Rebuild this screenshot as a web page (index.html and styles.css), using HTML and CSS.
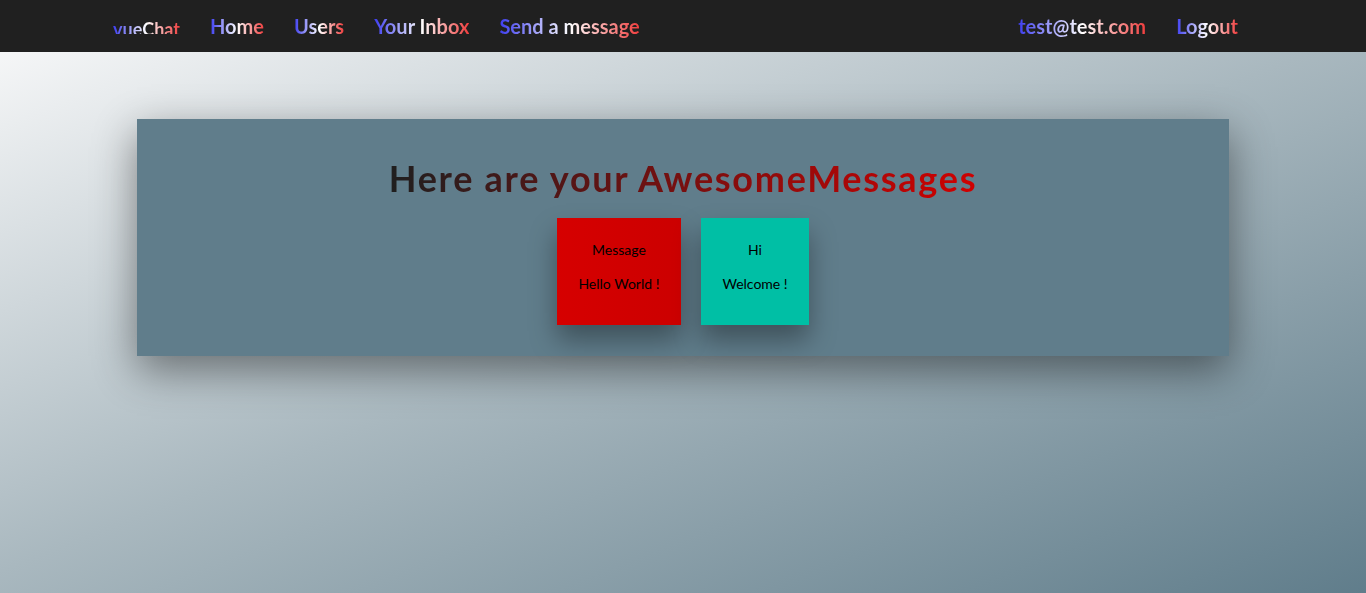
FILE: index.html
```html
<!DOCTYPE html>
<html>
<head>
<meta charset="utf-8">
<link rel="stylesheet" href="styles.css">
</head>
<body>
<nav class="navbar">
  <div class="nav-inner">
    <div class="nav-left">
      <a class="brand"><span class="grad">vueChat</span></a>
      <a class="nav-link"><span class="grad">Home</span></a>
      <a class="nav-link"><span class="grad">Users</span></a>
      <a class="nav-link"><span class="grad">Your Inbox</span></a>
      <a class="nav-link"><span class="grad">Send a message</span></a>
    </div>
    <div class="nav-right">
      <a class="nav-link"><span class="grad">test@test.com</span></a>
      <a class="nav-link"><span class="grad">Logout</span></a>
    </div>
  </div>
</nav>
<main class="page">
  <section class="panel">
    <h1 class="title">Here are your AwesomeMessages</h1>
    <div class="cards">
      <div class="card card-red">
        <p>Message</p>
        <p>Hello World !</p>
      </div>
      <div class="card card-teal">
        <p>Hi</p>
        <p>Welcome !</p>
      </div>
    </div>
  </section>
</main>
</body>
</html>
```

FILE: styles.css
```css
* { box-sizing: border-box; }
html, body { margin: 0; padding: 0; height: 100%; }
body {
  font-family: Lato, "Open Sans", sans-serif;
  display: flex;
  flex-direction: column;
  min-height: 593px;
}
.navbar {
  background: #202020;
  height: 52px;
  flex: none;
}
.nav-inner {
  width: 1140px;
  margin: 0 auto;
  height: 100%;
  display: flex;
  justify-content: space-between;
  align-items: center;
}
.nav-left, .nav-right { display: flex; align-items: center; }
.grad {
  background: linear-gradient(to right, #3c3cf0, #ffffff 50%, #f03c3c);
  -webkit-background-clip: text;
  background-clip: text;
  color: transparent;
}
.brand {
  font-size: 18px;
  font-weight: 700;
  padding: 0 15px 0 0;
  height: 16px;
  line-height: 22px;
  overflow: hidden;
  display: block;
  margin-top: -1px;
}
.brand .grad { display: inline-block; line-height: 22px; }
.nav-link {
  font-size: 20px;
  font-weight: 700;
  padding: 0 15px;
  line-height: 52px;
}
.page {
  flex: 1;
  background: linear-gradient(to bottom right, #f5f6f7 0%, #a9b8bf 48%, #607d8b 100%);
  padding-top: 67px;
}
.panel {
  width: 80%;
  margin: 0 auto;
  background: #607d8b;
  box-shadow: 0 14px 40px rgba(0,0,0,0.45);
  padding: 38px 0 31px;
  display: flex;
  flex-direction: column;
  align-items: center;
}
.title {
  margin: 0 0 18px;
  font-size: 36px;
  font-weight: 700;
  letter-spacing: 1.72px;
  line-height: 43px;
  background: linear-gradient(to right, #1f1f1f, #d00000);
  -webkit-background-clip: text;
  background-clip: text;
  color: transparent;
}
.cards {
  display: flex;
  gap: 20px;
  justify-content: center;
}
.card {
  padding: 8px 21.5px 17px;
  font-size: 14px;
  color: #000;
  text-align: center;
  box-shadow: 0 15px 25px rgba(0,0,0,0.35);
}
.card p { margin: 14px 0; line-height: 20px; }
.card-red { background: linear-gradient(to right, #d60000, #cc0000); }
.card-teal { background: #00bfa5; }
```
